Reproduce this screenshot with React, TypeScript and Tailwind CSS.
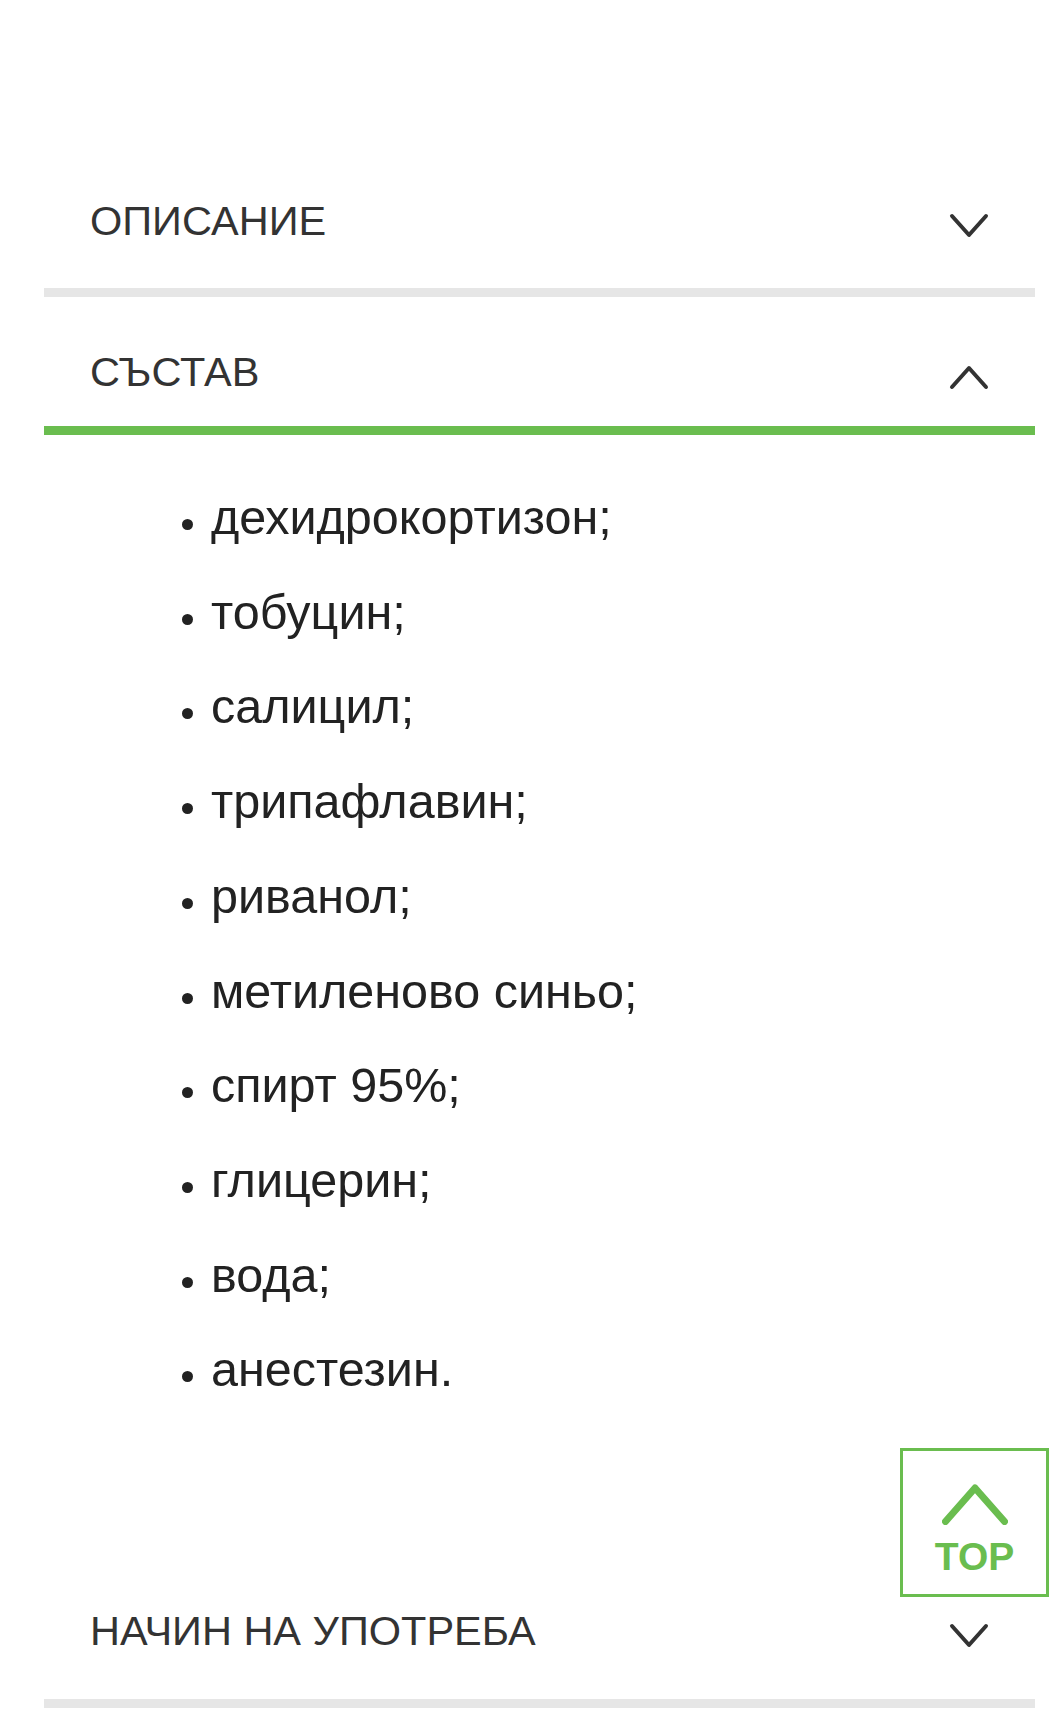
import React from "react";

const items = [
  "дехидрокортизон;",
  "тобуцин;",
  "салицил;",
  "трипафлавин;",
  "риванол;",
  "метиленово синьо;",
  "спирт 95%;",
  "глицерин;",
  "вода;",
  "анестезин.",
];

function Chevron({ up }: { up?: boolean }) {
  return (
    <svg
      width="40"
      height="26"
      viewBox="0 0 40 26"
      className="mt-[10px] shrink-0"
      fill="none"
      stroke="#333333"
      strokeWidth="4"
      strokeLinecap="round"
      strokeLinejoin="round"
    >
      <polyline points={up ? "3,23 20,4 37,23" : "3,3 20,22 37,3"} />
    </svg>
  );
}

export default function App() {
  return (
    <div className="relative min-h-[1732px] bg-white pt-[146px] pl-[44px] pr-[24px] font-['Liberation_Sans',Arial,sans-serif]">
      <div className="flex flex-col">
        <div className="flex items-center justify-between pt-[52px] pb-[44px] pl-[46px] pr-[46px] border-b-[9px] border-[#e6e6e6]">
          <span className="text-[41.5px] leading-[46px] text-[#333333]">ОПИСАНИЕ</span>
          <Chevron />
        </div>
        <div className="flex items-center justify-between pt-[52px] pb-[31px] pl-[46px] pr-[46px] border-b-[9px] border-[#6abd4f]">
          <span className="text-[41.5px] leading-[46px] text-[#333333]">СЪСТАВ</span>
          <Chevron up />
        </div>
        <ul className="mt-[35px] pb-[139px] pl-[138px]">
          {items.map((t) => (
            <li key={t} className="text-[48.5px] leading-[94.7px] text-[#222222]">
              <span className="inline-block w-[11px] h-[11px] rounded-full bg-[#222222] mr-[18px] align-[4px]"></span>
              {t}
            </li>
          ))}
        </ul>
        <div className="flex items-center justify-between pt-[52px] pb-[45px] pl-[46px] pr-[46px] border-b-[9px] border-[#e6e6e6]">
          <span className="text-[41.5px] leading-[46px] text-[#333333]">НАЧИН НА УПОТРЕБА</span>
          <Chevron />
        </div>
      </div>

      <div className="absolute left-[900px] top-[1448px] w-[149px] h-[149px] border-[3px] border-[#6abd4f] bg-white flex flex-col items-center pt-[33px]">
        <svg
          width="66"
          height="41"
          viewBox="0 0 66 41"
          fill="none"
          stroke="#6abd4f"
          strokeWidth="7"
          strokeLinecap="round"
          strokeLinejoin="round"
        >
          <polyline points="3.5,37.5 33,4 62.5,37.5" />
        </svg>
        <span className="mt-[12px] text-[39px] leading-[39px] font-bold text-[#6abd4f]">TOP</span>
      </div>
    </div>
  );
}
